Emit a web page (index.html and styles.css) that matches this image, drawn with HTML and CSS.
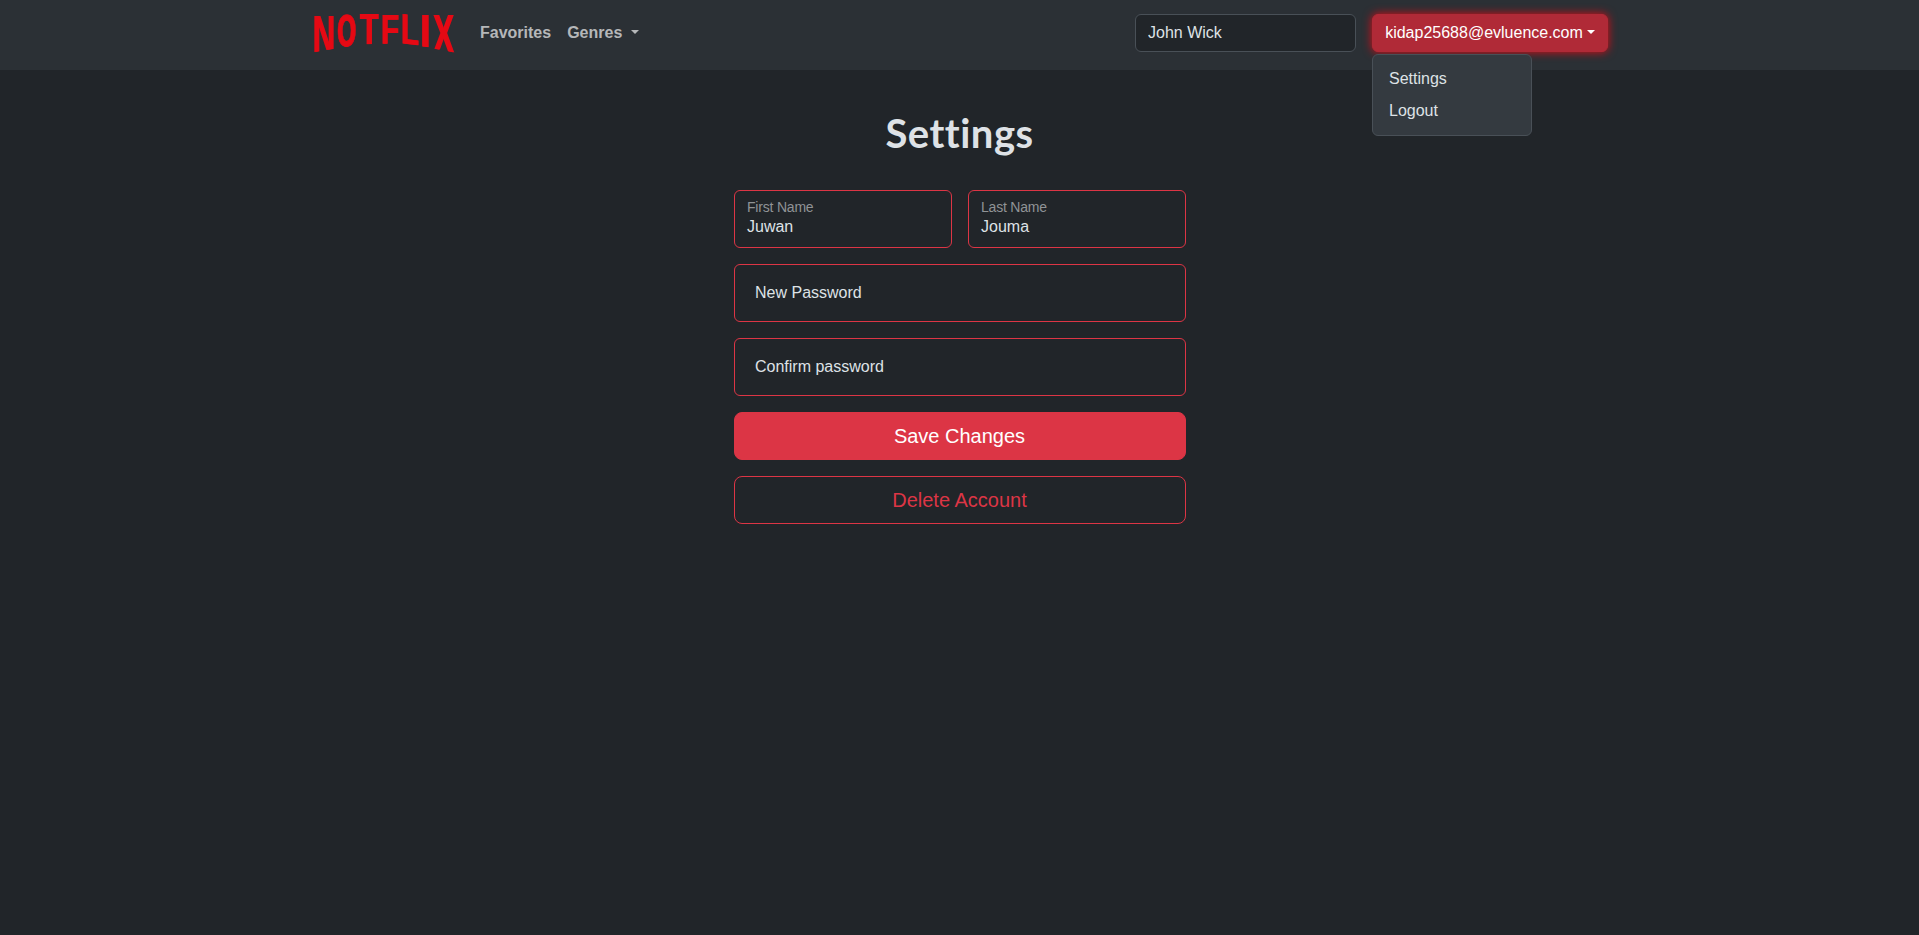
FILE: index.html
```html
<!DOCTYPE html>
<html lang="en">
<head>
<meta charset="utf-8">
<title>Notflix - Settings</title>
<link rel="stylesheet" href="styles.css">
</head>
<body>
<header class="navbar">
  <div class="container">
    <a class="brand" href="#">
      <svg class="logo" width="144" height="40" viewBox="312 13 144 40" role="img">
        <defs>
          <clipPath id="arch"><path d="M312 13H456V53L433 48.5L428.500 47.300L422 46.400L399 43.600L360 44.200L333.500 48.800L312 52.600Z"/></clipPath>
        </defs>
        <g clip-path="url(#arch)">
          <text transform="matrix(.312 0 0 .545 312.2 53)">N</text>
          <text transform="matrix(.304 0 0 .440 359.4 44.5)">T</text>
          <text transform="matrix(.298 0 0 .430 380.5 43.7)">F</text>
          <text transform="matrix(.390 0 0 .484 419.500 48)">I</text>
          <text transform="matrix(.318 0 0 .552 432.6 53)">X</text>
        </g>
        <text class="wide" transform="matrix(.238 -.012 0 .446 337.100 46.400)">O</text>
        <text transform="matrix(.296 .033 0 .430 400.6 43.3)">L</text>
      </svg>
    </a>
    <nav class="links">
      <a href="#">Favorites</a>
      <a class="caret wide-caret" href="#">Genres</a>
    </nav>
    <input class="search" type="text" value="John Wick">
    <div class="account">
      <button class="account-btn caret" type="button">kidap25688@evluence.com</button>
      <div class="menu">
        <a href="#">Settings</a>
        <a href="#">Logout</a>
      </div>
    </div>
  </div>
</header>
<main class="settings">
  <h1>Settings</h1>
  <form class="form">
    <div class="row">
      <label class="field"><span>First Name</span><b>Juwan</b></label>
      <label class="field"><span>Last Name</span><b>Jouma</b></label>
    </div>
    <input class="password" type="password" placeholder="New Password">
    <input class="password" type="password" placeholder="Confirm password">
    <button class="btn save" type="button">Save Changes</button>
    <button class="btn delete" type="button">Delete Account</button>
  </form>
</main>
</body>
</html>
```
FILE: styles.css
```css
* { box-sizing: border-box; }
body {
  margin: 0;
  min-height: 100vh;
  background: #212529;
  color: #dee2e6;
  font: 16px/24px "Liberation Sans", Arial, sans-serif;
}
a { color: inherit; text-decoration: none; }
input, button { font: inherit; }
.navbar { height: 70px; background: #2b3035; }
.container {
  display: flex;
  align-items: flex-start;
  width: 1297px;
  margin: 0 auto;
  padding-top: 13px;
}
.brand { height: 40px; margin-left: 1px; }
.logo { display: block; overflow: visible; filter: drop-shadow(1px 0 0 #e50914); }
.logo text {
  font: bold 100px "Liberation Sans", Arial, sans-serif;
  fill: #e50914;
}
.logo .wide { stroke: #e50914; stroke-width: 2px; }
.links {
  display: flex;
  gap: 16px;
  margin: 8px auto 0 24px;
  font-weight: bold;
  color: #b5b7b9;
}
.caret::after {
  content: "";
  display: inline-block;
  margin-left: 4px;
  vertical-align: 4px;
  border: 4.8px solid transparent;
  border-top-color: currentColor;
  border-bottom: 0;
}
.wide-caret::after { margin-left: 9px; }
.search {
  width: 221px;
  height: 38px;
  margin-top: 1px;
  padding: 6px 12px;
  border: 1px solid #495057;
  border-radius: 6px;
  background: #212529;
  color: #dee2e6;
}
.account { position: relative; margin: 1px 0 0 16px; }
.account-btn {
  display: block;
  width: 236px;
  height: 38px;
  padding: 6px 0;
  border: 1px solid #b02a37;
  border-radius: 6px;
  background: #b02a37;
  box-shadow: 0 0 10px #e50914;
  color: #fff;
  white-space: nowrap;
}
.menu {
  position: absolute;
  top: 40px;
  left: 0;
  width: 160px;
  padding: 8px 0;
  border: 1px solid #495057;
  border-radius: 6px;
  background: #343a40;
}
.menu a { display: block; padding: 4px 16px; }
.settings { width: 452px; margin: 0 auto; padding-top: 39px; }
h1 {
  height: 48px;
  margin: 0 0 33px;
  font: 700 40px/48px Lato, sans-serif;
  font-variant-ligatures: none;
  letter-spacing: .5px;
  text-align: center;
}
.form { display: grid; gap: 16px; }
.row { display: grid; grid-template-columns: 1fr 1fr; gap: 16px; }
.field {
  display: flex;
  flex-direction: column;
  height: 58px;
  padding: 6px 12.5px;
  border: 1px solid #dc3545;
  border-radius: 6px;
}
.field span {
  font-size: 14px;
  line-height: 20px;
  letter-spacing: -.2px;
  color: #909396;
}
.field b { font-weight: normal; line-height: 19px; }
.password {
  width: 100%;
  height: 58px;
  padding: 0 20.5px;
  border: 1px solid #dc3545;
  border-radius: 6px;
  background: transparent;
}
.password::placeholder { color: #dee2e6; opacity: 1; }
.btn {
  height: 48px;
  border: 1px solid #dc3545;
  border-radius: 8px;
  font-size: 20px;
}
.save { background: #dc3545; color: #fff; }
.delete { background: transparent; color: #dc3545; }
```
